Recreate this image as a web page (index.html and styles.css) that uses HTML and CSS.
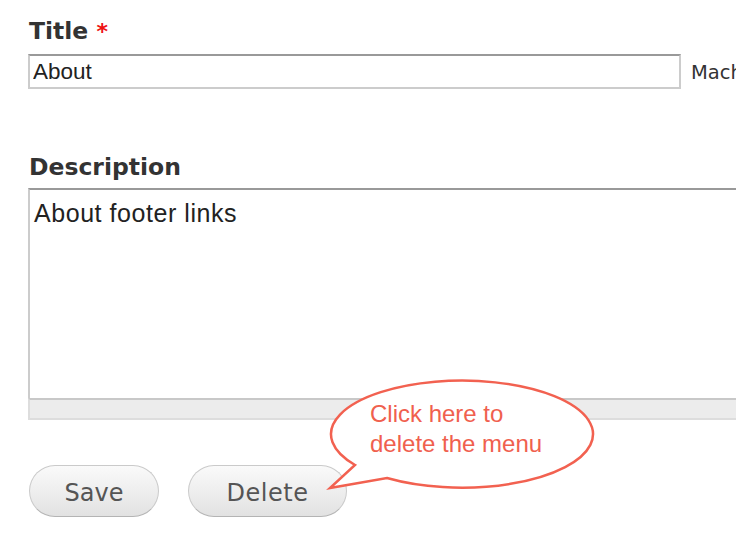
FILE: index.html
```html
<!DOCTYPE html>
<html>
<head>
<meta charset="utf-8">
<link rel="stylesheet" href="styles.css">
</head>
<body>
<div class="page">
  <form class="form">
    <div class="field field-title">
      <label class="label" for="title">Title <span class="req">*</span></label>
      <div class="row">
        <input id="title" class="text-input" type="text" value="About">
        <span class="machine">Machine name: about</span>
      </div>
    </div>
    <div class="field field-desc">
      <label class="label" for="desc">Description</label>
      <div class="textarea-wrap">
        <textarea id="desc" class="textarea">About footer links</textarea>
        <div class="grippie"></div>
      </div>
    </div>
    <div class="actions">
      <button type="button" class="btn btn-save">Save</button>
      <button type="button" class="btn btn-delete">Delete</button>
    </div>
  </form>
  <div class="callout">
    <svg class="callout-shape" width="272" height="116" viewBox="0 0 272 116">
      <path d="M 29 89 A 131 53.5 0 1 1 61 102 L 4 112 Z" fill="#ffffff" stroke="#f26150" stroke-width="2.5" stroke-linejoin="miter"/>
    </svg>
    <div class="callout-text">Click here to<br>delete the menu</div>
  </div>
</div>
</body>
</html>
```
FILE: styles.css
```css
html, body {
  margin: 0;
  padding: 0;
  background: #ffffff;
  overflow: hidden;
}
.page {
  position: relative;
  width: 736px;
  height: 538px;
  overflow: hidden;
}
.form {
  padding: 18px 0 0 28px;
  margin: 0;
}
.label {
  display: block;
  font-family: "DejaVu Sans", Verdana, sans-serif;
  font-weight: bold;
  font-size: 23.5px;
  line-height: 27px;
  color: #333333;
  padding-left: 1px;
}
.req {
  color: #ee1111;
  font-size: 22px;
}
.field-title .label {
  margin-bottom: 9px;
}
.row {
  display: flex;
  align-items: center;
  white-space: nowrap;
}
.text-input {
  flex: 0 0 auto;
  box-sizing: border-box;
  width: 653px;
  height: 35px;
  margin: 0;
  border: 2px solid #cccccc;
  border-top-color: #999999;
  padding: 0 3px;
  font-family: "Liberation Sans", Arial, sans-serif;
  font-size: 22.5px;
  color: #222222;
  background: #ffffff;
  outline: none;
}
.machine {
  flex: 0 0 auto;
  margin-left: 10px;
  padding-top: 2px;
  font-family: "DejaVu Sans", Verdana, sans-serif;
  font-size: 19.5px;
  color: #333333;
}
.field-desc {
  margin-top: 65px;
}
.field-desc .label {
  margin-bottom: 7px;
}
.textarea-wrap {
  width: 780px;
}
.textarea {
  display: block;
  box-sizing: border-box;
  width: 100%;
  height: 210px;
  margin: 0;
  border: 2px solid #cccccc;
  border-top-color: #999999;
  border-bottom: none;
  padding: 9px 4px;
  font-family: "Liberation Sans", Arial, sans-serif;
  font-size: 25px;
  letter-spacing: 0.55px;
  line-height: 28px;
  color: #222222;
  resize: none;
  outline: none;
}
.grippie {
  box-sizing: border-box;
  height: 22px;
  background: #ececec;
  border-top: 2px solid #c8c8c8;
  border-left: 2px solid #dddddd;
  border-bottom: 2px solid #dddddd;
}
.actions {
  display: flex;
  gap: 29px;
  margin-top: 45px;
  padding-left: 1px;
}
.btn {
  box-sizing: border-box;
  height: 52px;
  border-radius: 26px;
  border: 1px solid #cacaca;
  border-bottom-color: #b4b4b4;
  background: linear-gradient(#fafafa, #e2e2e2);
  font-family: "DejaVu Sans", Verdana, sans-serif;
  font-size: 24px;
  color: #555555;
  padding: 3px 0 0;
  text-align: center;
}
.btn-save {
  width: 130px;
}
.btn-delete {
  width: 159px;
  letter-spacing: 0.5px;
}
.callout {
  position: absolute;
  left: 326px;
  top: 376px;
  width: 272px;
  height: 116px;
}
.callout-shape {
  position: absolute;
  left: 0;
  top: 0;
}
.callout-text {
  position: relative;
  padding: 23px 0 0 44px;
  font-family: "Liberation Sans", Arial, sans-serif;
  font-size: 24px;
  line-height: 30px;
  color: #f0604e;
}
```
